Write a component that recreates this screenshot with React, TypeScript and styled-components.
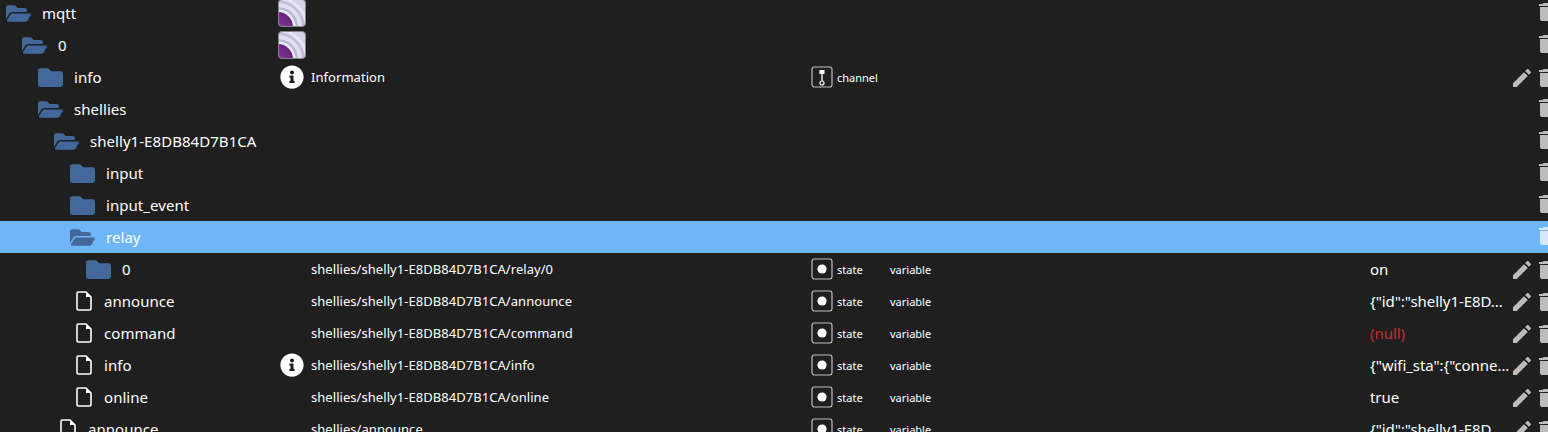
import React from "react";
import styled, { createGlobalStyle } from "styled-components";
import { FaFolder, FaFolderOpen, FaInfoCircle } from "react-icons/fa";

const Global = createGlobalStyle`
  html, body { margin: 0; padding: 0; height: 432px; overflow: hidden; background: #1f1f1f; }
  body { font-family: "Noto Sans", "Open Sans", Arial, sans-serif; color: #fff; }
`;

const Page = styled.div`
  width: 1548px;
  height: 432px;
  overflow: hidden;
`;

const Tree = styled.div`
  width: 1572px;
  margin-top: -3px;
`;

const Row = styled.div<{ $selected?: boolean }>`
  display: grid;
  grid-template-columns: 278px 33px 500px 26px 53px 480px 143px 24px 34px;
  align-items: center;
  height: 32px;
  background: ${(p) => (p.$selected ? "#6eb6f7" : "transparent")};
`;

const NameCell = styled.div<{ $level: number; $file?: boolean }>`
  display: flex;
  align-items: center;
  padding-left: ${(p) => p.$level * 16 + (p.$file ? 12 : 6)}px;
  min-width: 0;
`;

const IconSlot = styled.span<{ $file?: boolean }>`
  display: flex;
  align-items: center;
  flex: none;
  width: ${(p) => (p.$file ? 28 : 36)}px;
  color: ${(p) => (p.$file ? "#fff" : "#43699a")};
`;

const Name = styled.span`
  font-size: 15px;
  letter-spacing: 0.05px;
  white-space: nowrap;
  color: #fff;
`;

const ObjIcon = styled.div`
  display: flex;
  align-items: center;
  color: #fff;
`;

const PathText = styled.div`
  font-size: 13px;
  letter-spacing: 0.05px;
  white-space: nowrap;
`;

const TypeIcon = styled.div`
  display: flex;
  align-items: center;
`;

const SmallText = styled.div`
  font-size: 11px;
  white-space: nowrap;
`;

const Value = styled.div<{ $null?: boolean }>`
  font-size: 15px;
  letter-spacing: -0.05px;
  color: ${(p) => (p.$null ? "#cc2a2a" : "#fff")};
  white-space: nowrap;
`;

const Action = styled.svg<{ $low?: boolean }>`
  display: block;
  width: 24px;
  height: 24px;
  margin: ${(p) => (p.$low ? "2px 0 0 -3px" : "0 0 2px -3px")};
  fill: rgba(255, 255, 255, 0.7);
`;

const MqttLogo = () => (
  <svg width="28" height="28" viewBox="0 0 28 28">
    <defs>
      <clipPath id="logo-clip">
        <rect x="0.5" y="0.5" width="27" height="27" rx="3.5" />
      </clipPath>
      <linearGradient id="logo-purple" x1="1" y1="0" x2="0" y2="1">
        <stop offset="0.2" stopColor="#6d2580" />
        <stop offset="1" stopColor="#b256ae" />
      </linearGradient>
      <filter id="logo-soft">
        <feGaussianBlur stdDeviation="0.6" />
      </filter>
    </defs>
    <g clipPath="url(#logo-clip)">
      <rect width="28" height="28" fill="#d5d2e6" />
      <g filter="url(#logo-soft)">
        <circle cx="0" cy="28" r="30" fill="#e8e6f2" />
        <circle cx="0" cy="28" r="27" fill="#c4c0dc" />
        <circle cx="0" cy="28" r="24" fill="#e2dfef" />
        <circle cx="0" cy="28" r="20" fill="#bcb7d6" />
        <circle cx="0" cy="28" r="17.5" fill="#ebe9f4" />
        <circle cx="0" cy="28" r="15" fill="url(#logo-purple)" />
      </g>
    </g>
    <rect x="0.5" y="0.5" width="27" height="27" rx="3.5" fill="none" stroke="#85858c" />
  </svg>
);

const FileIcon = () => (
  <svg width="16" height="20" viewBox="0 0 16 20">
    <path
      d="M2.5 1H10L15 6V17.5A1.5 1.5 0 0 1 13.5 19H2.5A1.5 1.5 0 0 1 1 17.5V2.5A1.5 1.5 0 0 1 2.5 1Z"
      fill="none"
      stroke="#fff"
      strokeWidth="1.6"
      strokeLinejoin="round"
    />
    <path d="M10 1V6H15Z" fill="#fff" />
  </svg>
);

const StateIcon = () => (
  <svg width="22" height="22" viewBox="0 0 22 22">
    <rect x="1" y="1" width="20" height="20" rx="2.5" fill="none" stroke="#bdbdbd" strokeWidth="1.2" />
    <circle cx="11" cy="11" r="4.6" fill="#fff" />
  </svg>
);

const ChannelIcon = () => (
  <svg width="22" height="22" viewBox="0 0 22 22">
    <rect x="1" y="1" width="20" height="20" rx="2.5" fill="none" stroke="#bdbdbd" strokeWidth="1.2" />
    <rect x="8.5" y="4" width="5" height="4" fill="#fff" />
    <rect x="10.2" y="8" width="1.6" height="7" fill="#d8d8d8" />
    <circle cx="11" cy="17" r="2" fill="none" stroke="#fff" strokeWidth="1.2" />
  </svg>
);

const Pencil = () => (
  <Action $low viewBox="0 0 24 24">
    <path d="M3 17.25V21h3.75L17.81 9.94l-3.75-3.75L3 17.25zM20.71 7.04c.39-.39.39-1.02 0-1.41l-2.34-2.34c-.39-.39-1.02-.39-1.41 0l-1.83 1.83 3.75 3.75 1.83-1.83z" />
  </Action>
);

const Trash = ({ low }: { low?: boolean }) => (
  <Action $low={low} viewBox="0 0 24 24">
    <path d="M6 19c0 1.1.9 2 2 2h8c1.1 0 2-.9 2-2V7H6v12zM19 4h-3.5l-1-1h-5l-1 1H5v2h14V4z" />
  </Action>
);

type Item = {
  name: string;
  level: number;
  kind: "open" | "closed" | "file";
  logo?: boolean;
  info?: boolean;
  path?: string;
  type?: "state" | "channel";
  role?: string;
  value?: string;
  isNull?: boolean;
  edit?: boolean;
  selected?: boolean;
};

const P = "shellies/shelly1-E8DB84D7B1CA";
const ANN = '{"id":"shelly1-E8D...';

const items: Item[] = [
  { name: "mqtt", level: 0, kind: "open", logo: true },
  { name: "0", level: 1, kind: "open", logo: true },
  { name: "info", level: 2, kind: "closed", info: true, path: "Information", type: "channel", edit: true },
  { name: "shellies", level: 2, kind: "open" },
  { name: "shelly1-E8DB84D7B1CA", level: 3, kind: "open" },
  { name: "input", level: 4, kind: "closed" },
  { name: "input_event", level: 4, kind: "closed" },
  { name: "relay", level: 4, kind: "open", selected: true },
  { name: "0", level: 5, kind: "closed", path: `${P}/relay/0`, type: "state", role: "variable", value: "on", edit: true },
  { name: "announce", level: 4, kind: "file", path: `${P}/announce`, type: "state", role: "variable", value: ANN, edit: true },
  { name: "command", level: 4, kind: "file", path: `${P}/command`, type: "state", role: "variable", value: "(null)", isNull: true, edit: true },
  { name: "info", level: 4, kind: "file", info: true, path: `${P}/info`, type: "state", role: "variable", value: '{"wifi_sta":{"conne...', edit: true },
  { name: "online", level: 4, kind: "file", path: `${P}/online`, type: "state", role: "variable", value: "true", edit: true },
  { name: "announce", level: 3, kind: "file", path: "shellies/announce", type: "state", role: "variable", value: ANN, edit: true },
];

const TreeIcon = ({ kind }: { kind: Item["kind"] }) => {
  if (kind === "open") return <FaFolderOpen size={25} />;
  if (kind === "closed") return <FaFolder size={25} />;
  return <FileIcon />;
};

export default function App() {
  return (
    <Page>
      <Global />
      <Tree>
        {items.map((it, i) => (
          <Row key={i} $selected={it.selected}>
            <NameCell $level={it.level} $file={it.kind === "file"}>
              <IconSlot $file={it.kind === "file"}>
                <TreeIcon kind={it.kind} />
              </IconSlot>
              <Name>{it.name}</Name>
            </NameCell>
            <ObjIcon>
              {it.logo && <MqttLogo />}
              {it.info && <FaInfoCircle size={24} style={{ marginLeft: 2 }} />}
            </ObjIcon>
            <PathText>{it.path}</PathText>
            <TypeIcon>
              {it.type === "state" && <StateIcon />}
              {it.type === "channel" && <ChannelIcon />}
            </TypeIcon>
            <SmallText>{it.type}</SmallText>
            <SmallText>{it.role}</SmallText>
            <Value $null={it.isNull}>{it.value}</Value>
            <div>{it.edit && <Pencil />}</div>
            <div>
              <Trash low={it.edit} />
            </div>
          </Row>
        ))}
      </Tree>
    </Page>
  );
}
